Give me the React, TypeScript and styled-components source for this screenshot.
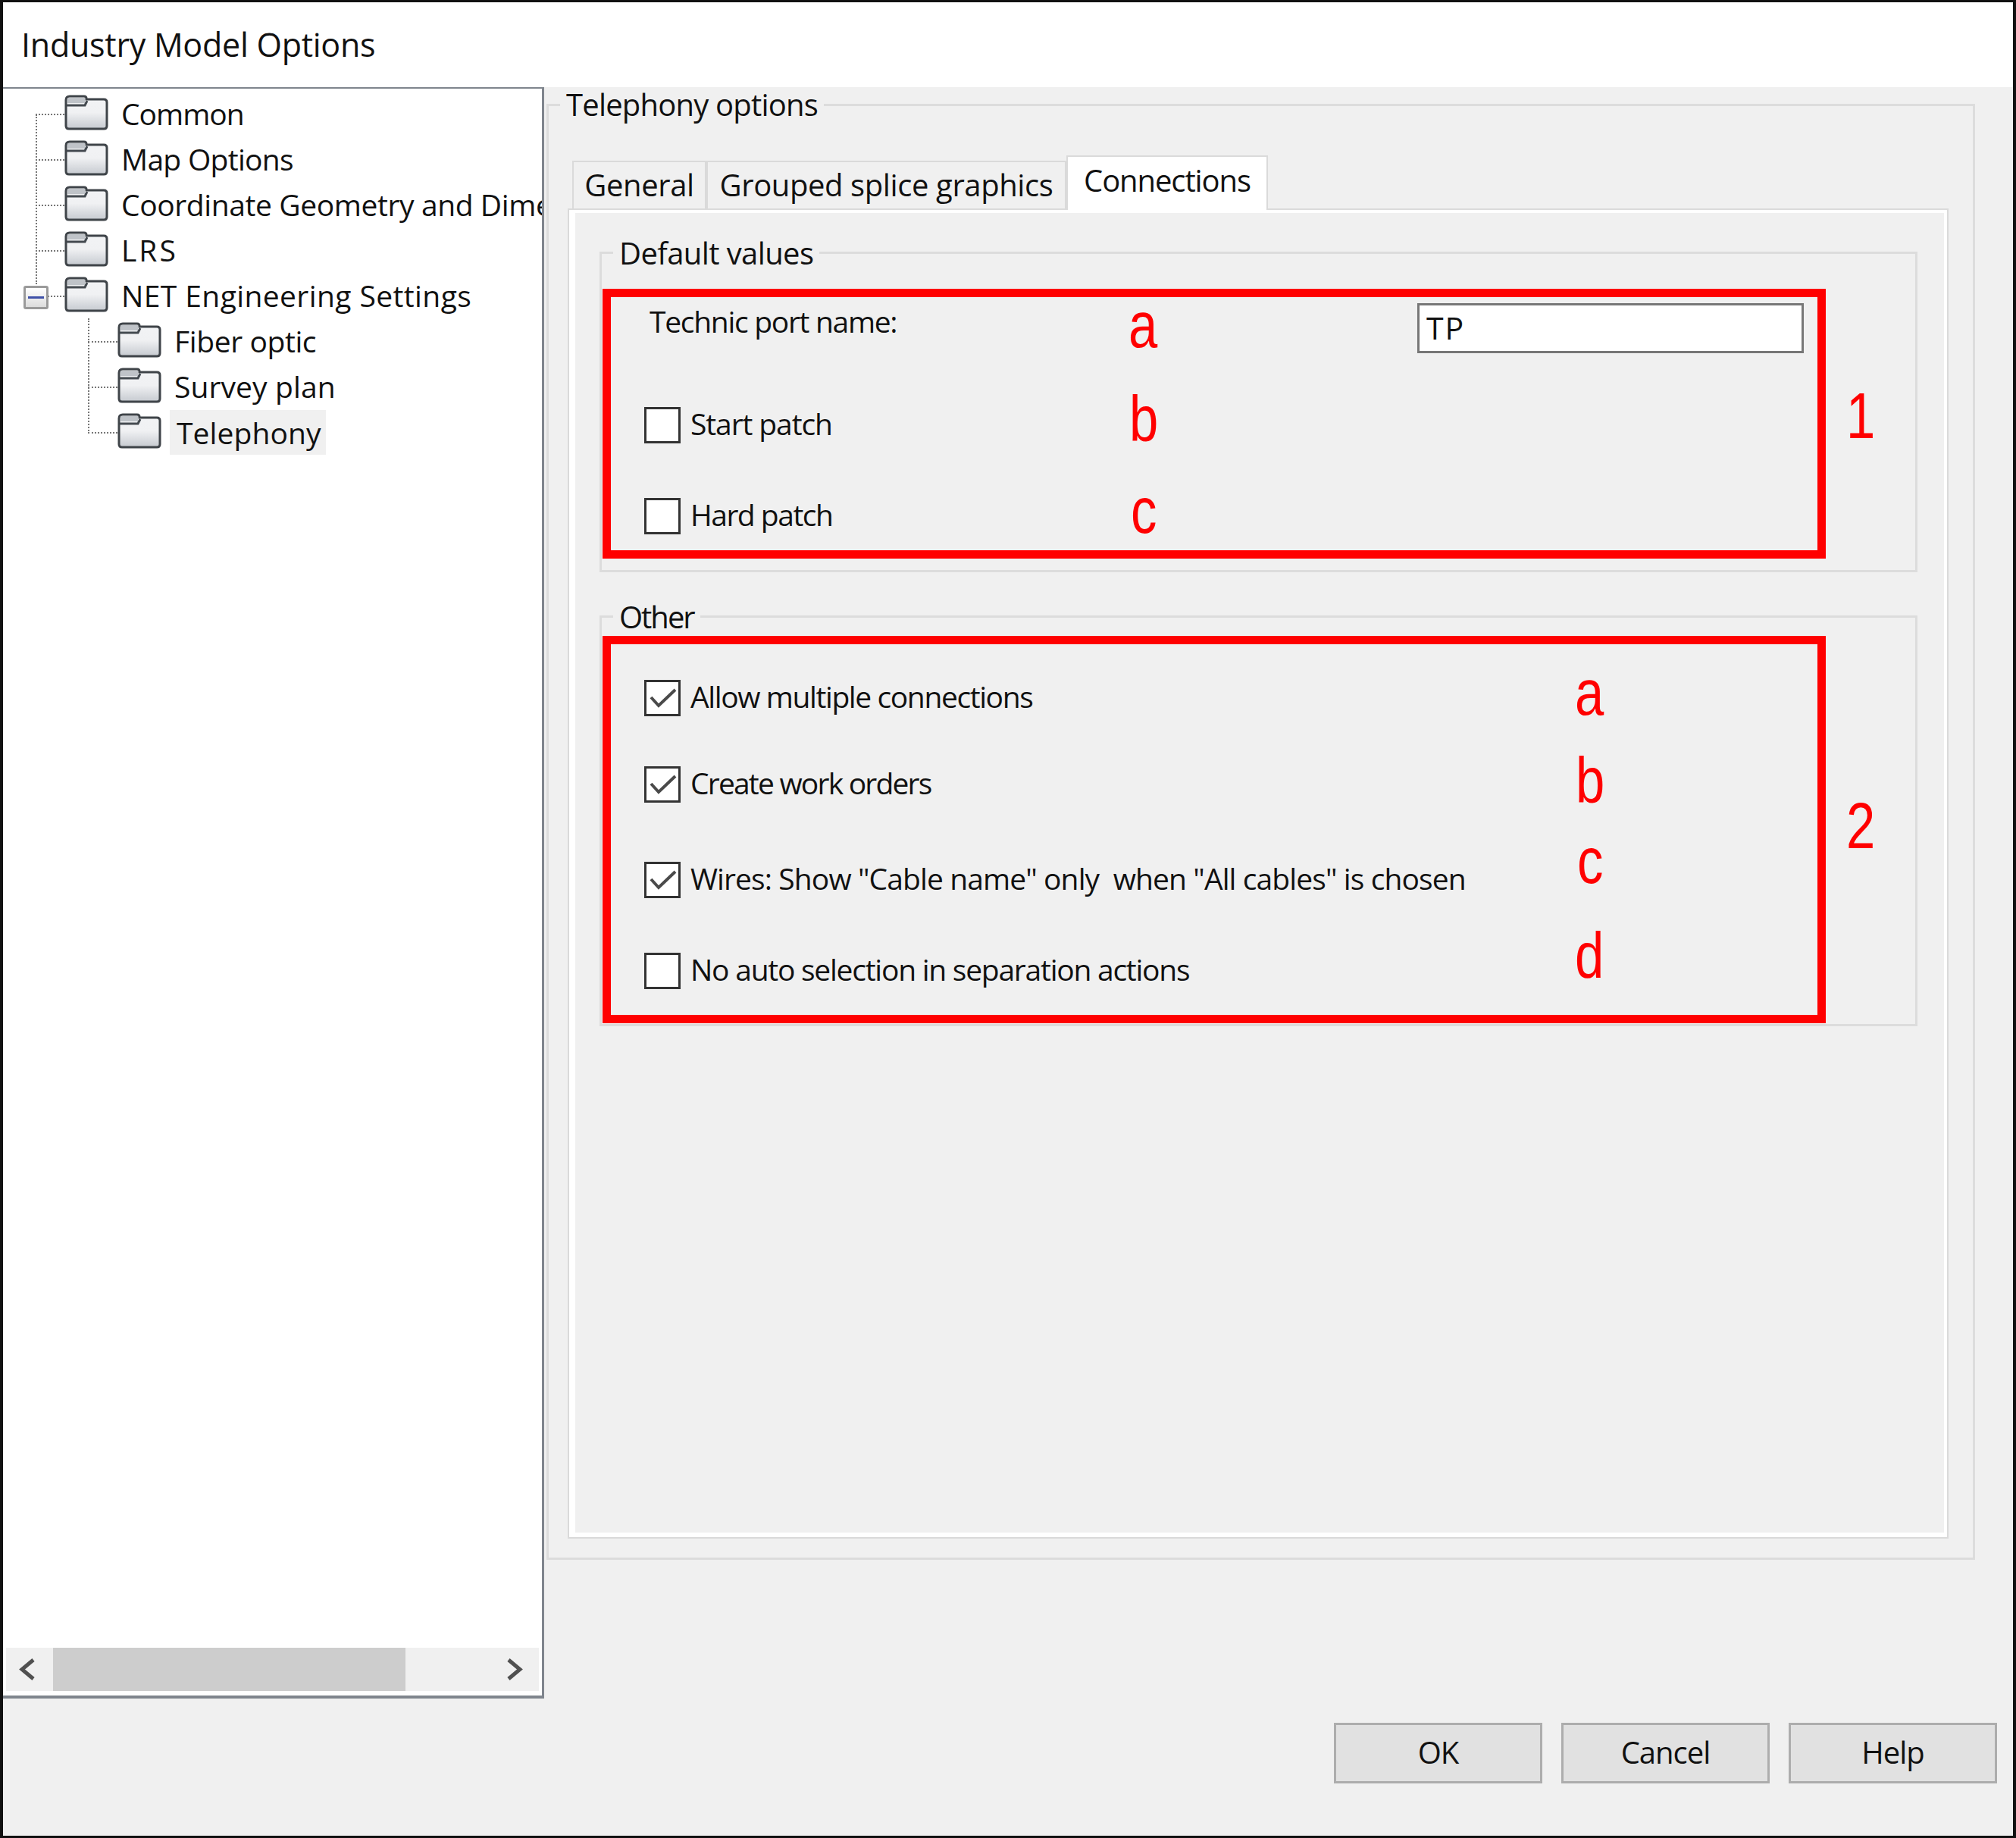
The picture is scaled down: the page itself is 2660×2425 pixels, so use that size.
import React from "react";
import styled, { createGlobalStyle } from "styled-components";

const GlobalStyle = createGlobalStyle`
  html, body {
    margin: 0;
    padding: 0;
    background: #fff;
  }
  * {
    box-sizing: border-box;
  }
`;

const uiFont = `"Open Sans", "Noto Sans", sans-serif`;

const Window = styled.div`
  width: 2660px;
  height: 2425px;
  display: flex;
  flex-direction: column;
  border: solid #111;
  border-width: 3px 4px;
  background: #f0f0f0;
  color: #111;
  font-family: ${uiFont};
  font-size: 40px;
  overflow: hidden;
`;

const TitleBar = styled.div`
  height: 112px;
  flex: none;
  background: #fff;
  padding: 27px 0 0 24px;
  font-size: 43px;
  line-height: 58px;
  letter-spacing: -0.25px;
  white-space: nowrap;
`;

const Body = styled.div`
  flex: 1;
  display: flex;
  min-height: 0;
`;

const TreePanel = styled.div`
  width: 714px;
  height: 2126px;
  flex: none;
  display: flex;
  flex-direction: column;
  background: #fff;
  border: solid #7f858d;
  border-width: 2px 3px 4px 0;
`;

const TreeArea = styled.div`
  flex: 1;
  position: relative;
  padding: 3px 0 0 0;
  overflow: hidden;
  min-height: 0;
`;

const TreeRow = styled.div<{ $level: number }>`
  height: 60px;
  display: flex;
  align-items: center;
  position: relative;
  padding-left: ${({ $level }) => ($level === 0 ? 81 : 151)}px;
  white-space: nowrap;
  &::before {
    content: "";
    position: absolute;
    left: ${({ $level }) => ($level === 0 ? 43 : 112)}px;
    top: 30px;
    width: ${({ $level }) => ($level === 0 ? 38 : 39)}px;
    border-top: 2px dotted #777;
  }
`;

const TreeLabel = styled.span<{ $selected?: boolean; $spacing: number }>`
  margin-left: ${({ $selected }) => ($selected ? 11 : 17)}px;
  padding: ${({ $selected }) => ($selected ? "0 6px 0 9px" : "0")};
  height: ${({ $selected }) => ($selected ? 59 : 60)}px;
  line-height: 60px;
  font-size: 39px;
  letter-spacing: ${({ $spacing }) => $spacing}px;
  background: ${({ $selected }) => ($selected ? "#f0f0f0" : "transparent")};
`;

const TreeGuide = styled.div<{ $left: number; $top: number; $height: number }>`
  position: absolute;
  left: ${({ $left }) => $left}px;
  top: ${({ $top }) => $top}px;
  height: ${({ $height }) => $height}px;
  border-left: 2px dotted #777;
`;

const ExpandBox = styled.div`
  position: absolute;
  left: 27px;
  top: 260px;
  width: 33px;
  height: 31px;
  border: 3px solid #9a9a9a;
  border-radius: 3px;
  background: linear-gradient(#fff, #dcdcdc);
  display: flex;
  align-items: center;
  justify-content: center;
  &::after {
    content: "";
    width: 21px;
    height: 3px;
    background: #3f51a8;
  }
`;

const FolderGlyph = styled.svg`
  flex: none;
  width: 58px;
  height: 48px;
  margin-bottom: 4px;
`;

const ScrollBar = styled.div`
  height: 57px;
  flex: none;
  margin: 0 4px 6px 4px;
  background: #f0f0f0;
  display: flex;
  align-items: center;
  justify-content: space-between;
  padding-left: 62px;
  position: relative;
`;

const ScrollThumb = styled.div`
  width: 465px;
  height: 57px;
  background: #cdcdcd;
`;

const ScrollArrow = styled.svg<{ $side: "left" | "right" }>`
  position: absolute;
  top: 14px;
  ${({ $side }) => ($side === "left" ? "left: 16px;" : "right: 20px;")}
  width: 24px;
  height: 29px;
`;

const Content = styled.div`
  flex: 1;
  display: flex;
  flex-direction: column;
  padding: 22px 50px 0 3px;
  min-width: 0;
`;

const OuterGroup = styled.div`
  height: 1921px;
  flex: none;
  position: relative;
  display: flex;
  flex-direction: column;
  border: 3px solid #dcdcdc;
  padding: 71px 32px 25px 25px;
`;

const Legend = styled.span<{ $left: number; $top: number; $spacing: number }>`
  position: absolute;
  left: ${({ $left }) => $left}px;
  top: ${({ $top }) => $top}px;
  height: 44px;
  line-height: 44px;
  padding: 0 8px;
  background: #f0f0f0;
  font-size: 40px;
  letter-spacing: ${({ $spacing }) => $spacing}px;
  white-space: nowrap;
`;

const TabStrip = styled.div`
  display: flex;
  align-items: flex-end;
  flex: none;
  height: 66px;
  padding-left: 6px;
  margin-bottom: -2px;
  position: relative;
  z-index: 1;
`;

const Tab = styled.div<{ $active?: boolean; $width: number; $spacing: number }>`
  width: ${({ $width }) => $width}px;
  height: ${({ $active }) => ($active ? 72 : 65)}px;
  background: ${({ $active }) => ($active ? "#fff" : "#f0f0f0")};
  border: 2px solid #dadada;
  border-bottom: ${({ $active }) => ($active ? "none" : "2px solid #dadada")};
  display: flex;
  justify-content: center;
  padding-top: ${({ $active }) => ($active ? 3 : 2)}px;
  line-height: 56px;
  font-size: 40px;
  letter-spacing: ${({ $spacing }) => $spacing}px;
  white-space: nowrap;
`;

const TabPage = styled.div`
  flex: 1;
  min-height: 0;
  border: 2px solid #dadada;
  background: #f0f0f0;
  box-shadow: inset 8px 4px 0 #fff, inset -4px -6px 0 #fff;
  padding: 55px 39px 0 40px;
  display: flex;
  flex-direction: column;
`;

const SectionGroup = styled.div<{ $height: number; $inset: number }>`
  height: ${({ $height }) => $height}px;
  flex: none;
  position: relative;
  border: 3px solid #dcdcdc;
  padding: ${({ $inset }) => $inset}px 0 0 1px;
  & + & {
    margin-top: 57px;
  }
`;

const RedBox = styled.div<{ $height: number }>`
  width: 1614px;
  height: ${({ $height }) => $height}px;
  position: relative;
  border: 11px solid #ff0000;
`;

const PortRow = styled.div`
  position: absolute;
  left: 0;
  right: 0;
  top: 8px;
  display: flex;
  justify-content: space-between;
  padding: 0 18px 0 51px;
`;

const PortLabel = styled.span`
  line-height: 56px;
  margin-top: -4px;
  font-size: 39px;
  letter-spacing: -1.3px;
`;

const PortInput = styled.div`
  width: 510px;
  height: 66px;
  background: #fff;
  border: 3px solid #777;
  padding-left: 9px;
  line-height: 58px;
  font-size: 41px;
  letter-spacing: 2px;
`;

const CheckRow = styled.div<{ $top: number }>`
  position: absolute;
  left: 44px;
  top: ${({ $top }) => $top}px;
  display: flex;
  align-items: center;
  gap: 13px;
  white-space: nowrap;
`;

const CheckBox = styled.div`
  width: 48px;
  height: 48px;
  flex: none;
  background: #fff;
  border: 3px solid #333;
`;

const CheckLabel = styled.span<{ $spacing: number }>`
  font-size: 39px;
  line-height: 48px;
  margin-bottom: 4px;
  letter-spacing: ${({ $spacing }) => $spacing}px;
`;

const Mark = styled.span<{ $left: number; $top: number }>`
  position: absolute;
  left: ${({ $left }) => $left}px;
  top: ${({ $top }) => $top}px;
  font-family: "Liberation Sans", Arial, sans-serif;
  font-size: 86px;
  line-height: 86px;
  color: #ff0000;
  transform: scaleX(0.8);
  transform-origin: left center;
`;

const ButtonBar = styled.div`
  display: flex;
  justify-content: flex-end;
  gap: 25px;
  margin: 215px -29px 0 0;
`;

const Button = styled.div`
  width: 275px;
  height: 80px;
  background: #e1e1e1;
  border: 3px solid #adadad;
  padding-bottom: 3px;
  display: flex;
  align-items: center;
  justify-content: center;
  font-size: 40px;
  letter-spacing: -1px;
`;

const FolderIcon = () => (
  <FolderGlyph viewBox="0 0 58 48">
    <defs>
      <linearGradient id="folderFill" x1="0" y1="0" x2="0" y2="1">
        <stop offset="0" stopColor="#f2f3f5" />
        <stop offset="0.5" stopColor="#f0f1f3" />
        <stop offset="1" stopColor="#c6cad0" />
      </linearGradient>
    </defs>
    <path
      d="M2 8 Q2 3 7 3 H26 Q29 3 29 6 V7 H52 Q56 7 56 11 V42 Q56 46 52 46 H6 Q2 46 2 42 Z"
      fill="url(#folderFill)"
      stroke="#3f4449"
      strokeWidth="3"
    />
    <path d="M4 5 H27 V12 H4 Z" fill="#bfc3c8" />
    <path d="M3 15 H27 L30 9" fill="none" stroke="#444a50" strokeWidth="3" />
  </FolderGlyph>
);

const CheckMark = () => (
  <svg width="42" height="42" viewBox="0 0 42 42" style={{ display: "block" }}>
    <path d="M6 20 L16 31 L38 10" fill="none" stroke="#4a4a4a" strokeWidth="4" />
  </svg>
);

const treeItems = [
  { label: "Common", level: 0, spacing: -1 },
  { label: "Map Options", level: 0, spacing: -0.7 },
  { label: "Coordinate Geometry and Dime", level: 0, spacing: -0.4 },
  { label: "LRS", level: 0, spacing: 3 },
  { label: "NET Engineering Settings", level: 0, spacing: 0.4 },
  { label: "Fiber optic", level: 1, spacing: -0.4 },
  { label: "Survey plan", level: 1, spacing: 0.1 },
  { label: "Telephony", level: 1, spacing: 0.1, selected: true },
];

const defaultChecks = [
  { label: "Start patch", top: 143, spacing: -1.1 },
  { label: "Hard patch", top: 263, spacing: -1.5 },
];

const otherChecks = [
  { label: "Allow multiple connections", top: 45, spacing: -1.4, checked: true },
  { label: "Create work orders", top: 159, spacing: -1.8, checked: true },
  { label: 'Wires: Show "Cable name" only\u00a0 when "All cables" is chosen', top: 285, spacing: -0.9, checked: true },
  { label: "No auto selection in separation actions", top: 405, spacing: -1.25 },
];

const App = () => {
  return (
    <>
      <GlobalStyle />
      <Window>
        <TitleBar>Industry Model Options</TitleBar>
        <Body>
          <TreePanel>
            <TreeArea>
              <TreeGuide $left={43} $top={34} $height={224} />
              <TreeGuide $left={112} $top={303} $height={152} />
              {treeItems.map((item) => (
                <TreeRow key={item.label} $level={item.level}>
                  <FolderIcon />
                  <TreeLabel $selected={item.selected} $spacing={item.spacing}>
                    {item.label}
                  </TreeLabel>
                </TreeRow>
              ))}
              <ExpandBox />
            </TreeArea>
            <ScrollBar>
              <ScrollArrow $side="left" viewBox="0 0 24 29">
                <path d="M20 2 L5 14.5 L20 27" fill="none" stroke="#505050" strokeWidth="5" />
              </ScrollArrow>
              <ScrollThumb />
              <ScrollArrow $side="right" viewBox="0 0 24 29">
                <path d="M4 2 L19 14.5 L4 27" fill="none" stroke="#505050" strokeWidth="5" />
              </ScrollArrow>
            </ScrollBar>
          </TreePanel>
          <Content>
            <OuterGroup>
              <Legend $left={15} $top={-24} $spacing={-0.8}>
                Telephony options
              </Legend>
              <TabStrip>
                <Tab $width={177} $spacing={-0.4}>General</Tab>
                <Tab $width={475} $spacing={-0.4}>Grouped splice graphics</Tab>
                <Tab $active $width={266} $spacing={-1.1}>Connections</Tab>
              </TabStrip>
              <TabPage>
                <SectionGroup $height={423} $inset={46}>
                  <Legend $left={15} $top={-23} $spacing={-0.6}>
                    Default values
                  </Legend>
                  <RedBox $height={356}>
                    <PortRow>
                      <PortLabel>Technic port name:</PortLabel>
                      <PortInput>TP</PortInput>
                    </PortRow>
                    {defaultChecks.map((check) => (
                      <CheckRow key={check.label} $top={check.top}>
                        <CheckBox />
                        <CheckLabel $spacing={check.spacing}>{check.label}</CheckLabel>
                      </CheckRow>
                    ))}
                    <Mark $left={683} $top={-7}>a</Mark>
                    <Mark $left={684} $top={117}>b</Mark>
                    <Mark $left={686} $top={238}>c</Mark>
                    <Mark $left={1630} $top={113}>1</Mark>
                  </RedBox>
                </SectionGroup>
                <SectionGroup $height={542} $inset={24}>
                  <Legend $left={15} $top={-23} $spacing={-2}>
                    Other
                  </Legend>
                  <RedBox $height={511}>
                    {otherChecks.map((check) => (
                      <CheckRow key={check.label} $top={check.top}>
                        <CheckBox>{check.checked && <CheckMark />}</CheckBox>
                        <CheckLabel $spacing={check.spacing}>{check.label}</CheckLabel>
                      </CheckRow>
                    ))}
                    <Mark $left={1272} $top={20}>a</Mark>
                    <Mark $left={1273} $top={136}>b</Mark>
                    <Mark $left={1275} $top={242}>c</Mark>
                    <Mark $left={1272} $top={367}>d</Mark>
                    <Mark $left={1630} $top={196}>2</Mark>
                  </RedBox>
                </SectionGroup>
              </TabPage>
            </OuterGroup>
            <ButtonBar>
              <Button>OK</Button>
              <Button>Cancel</Button>
              <Button>Help</Button>
            </ButtonBar>
          </Content>
        </Body>
      </Window>
    </>
  );
};

export default App;
